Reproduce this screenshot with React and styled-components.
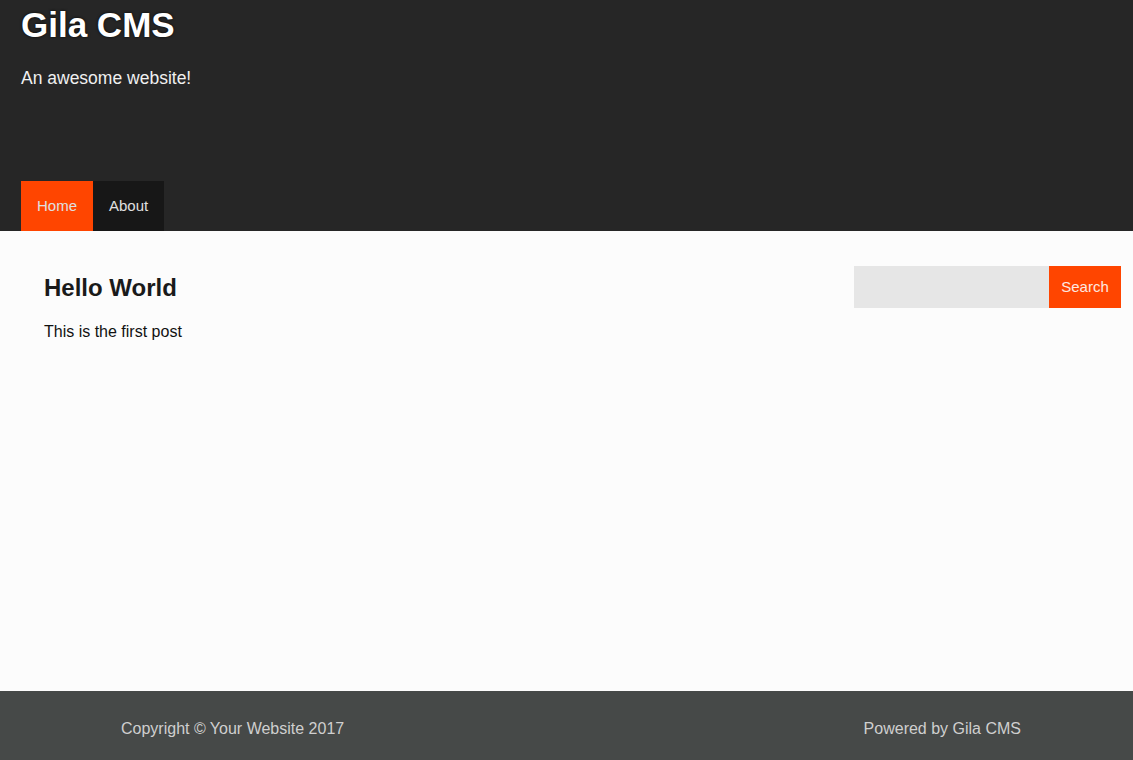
import React from "react";
import styled, {createGlobalStyle} from "styled-components";

const Global = createGlobalStyle`
  html, body {
    margin: 0;
    padding: 0;
    background: #fcfcfc;
    font-family: "Liberation Sans", Arial, sans-serif;
  }
  * {
    box-sizing: border-box;
  }
`;

const Page = styled.div`
  display: flex;
  flex-direction: column;
  min-height: 760px;
`;

const Header = styled.header`
  background: #262626;
  height: 231px;
  padding: 0 21px;
  display: flex;
  flex-direction: column;
`;

const Title = styled.h1`
  margin: 5px 0 0;
  font-size: 35px;
  line-height: 40px;
  font-weight: bold;
  color: #fff;
  text-shadow: 0 0 3px rgba(0, 0, 0, 0.9);
`;

const Tagline = styled.p`
  margin: 23px 0 0;
  font-size: 17.5px;
  line-height: 20px;
  color: #f0f0f0;
`;

const Nav = styled.nav`
  margin-top: auto;
  display: flex;
`;

const NavItem = styled.a`
  display: block;
  height: 50px;
  line-height: 50px;
  padding: 0 ${props => props.pad || 16}px;
  font-size: 15px;
  color: #e0e0e0;
  text-decoration: none;
  background: ${props => props.active ? '#ff4500' : '#171717'};
`;

const Main = styled.main`
  flex: 1;
  display: flex;
  justify-content: space-between;
  align-items: flex-start;
  padding: 35px 12px 0 44px;
`;

const Post = styled.article`
  padding-top: 8px;
`;

const PostTitle = styled.h2`
  margin: 0;
  font-size: 24px;
  line-height: 28px;
  font-weight: bold;
  color: #1a1a1a;
`;

const PostBody = styled.p`
  margin: 20px 0 0;
  font-size: 16px;
  line-height: 20px;
  color: #111;
`;

const SearchForm = styled.form`
  display: flex;
  height: 42px;
`;

const SearchInput = styled.input`
  width: 195px;
  height: 42px;
  border: none;
  outline: none;
  background: #e6e6e6;
  padding: 0 10px;
  font: inherit;
`;

const SearchButton = styled.button`
  width: 72px;
  height: 42px;
  border: none;
  background: #ff4500;
  color: #fde8e0;
  font-family: "Liberation Sans", Arial, sans-serif;
  font-size: 15px;
  line-height: 41px;
  padding: 0 0 1px;
`;

const Footer = styled.footer`
  height: 69px;
  background: #464948;
  display: flex;
  align-items: center;
  justify-content: space-between;
  padding: 6px 112px 0 121px;
  font-size: 16px;
  color: #cfcfcf;
`;

export default function App() {
  return <Page>
    <Global/>
    <Header>
      <Title>Gila CMS</Title>
      <Tagline>An awesome website!</Tagline>
      <Nav>
        <NavItem href="#" active>Home</NavItem>
        <NavItem href="#">About</NavItem>
      </Nav>
    </Header>
    <Main>
      <Post>
        <PostTitle>Hello World</PostTitle>
        <PostBody>This is the first post</PostBody>
      </Post>
      <SearchForm onSubmit={e => e.preventDefault()}>
        <SearchInput type="text"/>
        <SearchButton type="submit">Search</SearchButton>
      </SearchForm>
    </Main>
    <Footer>
      <span>Copyright © Your Website 2017</span>
      <span>Powered by Gila CMS</span>
    </Footer>
  </Page>;
}
